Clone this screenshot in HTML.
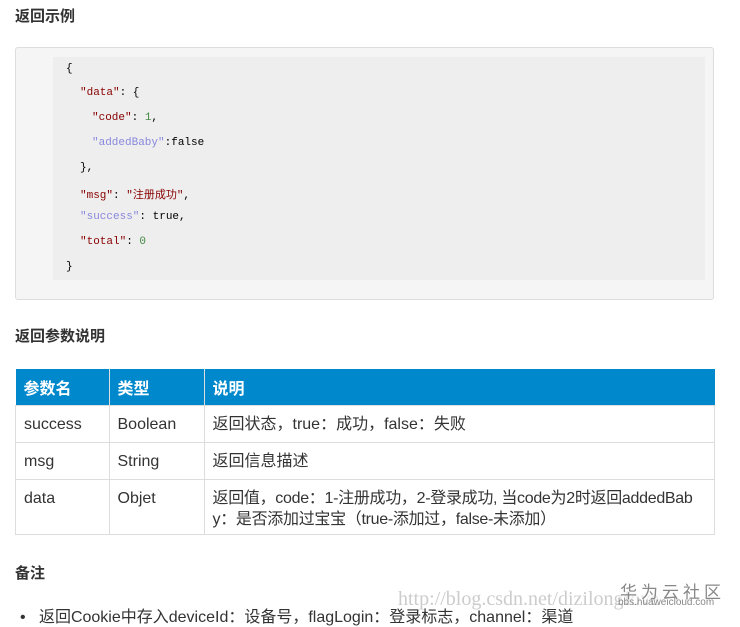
<html><head><style>
body{margin:0;background:#fff;font-family:"Liberation Sans","Noto Sans CJK SC",sans-serif;color:#333;width:740px;height:621px;overflow:hidden;position:relative}
.h{position:absolute;left:15px;font-size:15px;font-weight:bold;color:#333}
.box{position:absolute;left:15px;top:47px;width:697px;height:251px;background:#f5f5f5;border:1px solid #ddd;border-radius:3px}
.pre{position:absolute;left:37px;top:9px;width:652px;height:223px;background:#eeeeee}
.l{position:absolute;font-family:"Liberation Mono","Noto Sans CJK SC",monospace;font-size:11px;white-space:pre;color:#000}
.s{color:#880000}.k{color:#8888dd}.n{color:#448844}
table{position:absolute;left:15px;top:369px;width:700px;border-collapse:collapse;font-size:16px}
th{background:#0088cc;color:#fff;text-align:left;height:36px;padding:0 8px;border-left:1px solid #ddd}
td{border:1px solid #ddd;padding:0 8px;vertical-align:top;line-height:24px;padding-top:7px;padding-bottom:5px;color:#333}
</style></head><body>
<div class="h" style="top:5px">返回示例</div>
<div class="box"><div class="pre">
<div class="l" style="left:13px;top:6px">{</div>
<div class="l" style="left:27px;top:30px"><span class="s">"data"</span>: {</div>
<div class="l" style="left:39px;top:55px"><span class="s">"code"</span>: <span class="n">1</span>,</div>
<div class="l" style="left:39px;top:80px"><span class="k">"addedBaby"</span>:false</div>
<div class="l" style="left:27px;top:105px">},</div>
<div class="l" style="left:27px;top:129px"><span class="s">"msg"</span>: <span class="s">"注册成功"</span>,</div>
<div class="l" style="left:27px;top:154px"><span class="k">"success"</span>: true,</div>
<div class="l" style="left:27px;top:179px"><span class="s">"total"</span>: <span class="n">0</span></div>
<div class="l" style="left:13px;top:204px">}</div>
</div></div>
<div class="h" style="top:325px">返回参数说明</div>
<table>
<tr><th style="width:77px;border-left:none">参数名</th><th style="width:78px">类型</th><th>说明</th></tr>
<tr><td>success</td><td>Boolean</td><td>返回状态，true：成功，false：失败</td></tr>
<tr><td>msg</td><td>String</td><td>返回信息描述</td></tr>
<tr><td>data</td><td>Objet</td><td style="line-height:21px;word-break:break-all;padding-top:8px;padding-bottom:4px;letter-spacing:-0.3px">返回值，code：1-注册成功，2-登录成功, 当code为2时返回addedBaby：是否添加过宝宝（true-添加过，false-未添加）</td></tr>
</table>
<div class="h" style="top:562px">备注</div>
<div style="position:absolute;left:20px;top:603px;font-size:16px;color:#333">•&nbsp;&nbsp;&nbsp;返回Cookie中存入deviceId：设备号，flagLogin：登录标志，channel：渠道</div>
<div style="position:absolute;left:398px;top:588px;font-family:'Liberation Serif',serif;font-size:20px;color:#ccc">http://blog.csdn.net/dizilongfove</div>
<div style="position:absolute;left:620px;top:578px;font-size:17px;color:#888;letter-spacing:4px;background:rgba(255,255,255,.6)">华为云社区</div>
<div style="position:absolute;left:618px;top:597px;font-size:10px;color:#888">bbs.huaweicloud.com</div>
</body></html>
